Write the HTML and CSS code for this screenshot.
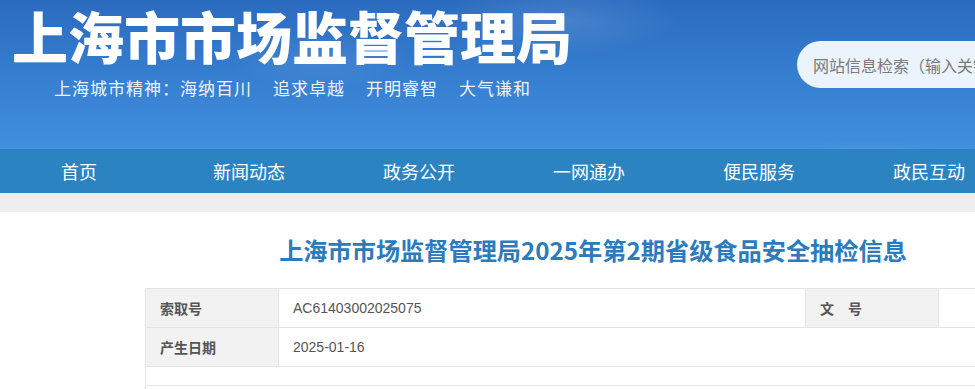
FILE: index.html
```html
<!DOCTYPE html>
<html lang="zh-CN">
<head>
    <meta charset="UTF-8">
    <meta name="viewport" content="width=device-width, initial-scale=1.0">
    <title>上海市市场监督管理局</title>
    <link rel="stylesheet" href="styles.css">
</head>
<body>
    <div class="header">
        <div class="wrap header-inner">
            <div class="brand">
                <h1 class="site-name">上海市市场监督管理局</h1>
                <p class="motto">上海城市精神：海纳百川<span>追求卓越</span><span>开明睿智</span><span>大气谦和</span></p>
            </div>
            <div class="search">
                <input type="text" placeholder="网站信息检索（输入关键字）">
            </div>
        </div>
    </div>
    <div class="nav">
        <ul class="wrap nav-list">
            <li><a href="#">首页</a></li>
            <li><a href="#">新闻动态</a></li>
            <li><a href="#">政务公开</a></li>
            <li><a href="#">一网通办</a></li>
            <li><a href="#">便民服务</a></li>
            <li><a href="#">政民互动</a></li>
            <li><a href="#">专题专栏</a></li>
        </ul>
    </div>
    <div class="band"></div>
    <div class="wrap main">
        <h2 class="article-title">上海市市场监督管理局2025年第2期省级食品安全抽检信息</h2>
        <table class="info-table">
            <tr>
                <th>索取号</th>
                <td>AC61403002025075</td>
                <th>文　号</th>
                <td></td>
            </tr>
            <tr>
                <th>产生日期</th>
                <td colspan="3">2025-01-16</td>
            </tr>
            <tr class="blank">
                <td colspan="4"></td>
            </tr>
            <tr>
                <td colspan="4"></td>
            </tr>
        </table>
    </div>
</body>
</html>
```

FILE: styles.css
```css
html {
    overflow-x: hidden;
}
body {
    margin: 0;
    padding: 0;
    font-family: "Liberation Sans", "Noto Sans CJK SC", sans-serif;
    background: #fff;
}
.wrap {
    width: 1200px;
}
.header {
    height: 149px;
    background:
        radial-gradient(ellipse 140px 40px at 870px 180px, rgba(255,255,255,0.18), rgba(255,255,255,0)),
        radial-gradient(ellipse 120px 35px at 560px 20px, rgba(255,255,255,0.12), rgba(255,255,255,0)),
        radial-gradient(ellipse 90px 30px at 320px 60px, rgba(255,255,255,0.08), rgba(255,255,255,0)),
        linear-gradient(#2b6bbf, #3a85d6 70%, #4090dd);
    overflow: hidden;
}
.header-inner {
    display: flex;
}
.brand {
    padding-left: 12px;
}
.site-name {
    margin: 5px 0 0;
    font-family: "Noto Sans CJK SC", sans-serif;
    font-size: 56px;
    font-weight: 900;
    line-height: 60px;
    color: #fff;
}
.motto {
    margin: 12px 0 0 42px;
    font-family: "Noto Sans CJK SC", sans-serif;
    font-size: 17px;
    line-height: 22px;
    letter-spacing: 1px;
    color: #eef4fc;
}
.motto span {
    margin-left: 21px;
}
.search {
    margin: 41px 0 0 auto;
}
.search input {
    box-sizing: border-box;
    width: 403px;
    height: 47px;
    padding: 0 16px;
    border: none;
    border-radius: 24px 0 0 24px;
    background: #ebf3fc;
    font-family: "Noto Sans CJK SC", sans-serif;
    font-size: 16px;
    color: #666;
    outline: none;
}
.search input::placeholder {
    color: #7a7a7a;
}
.nav {
    height: 44px;
    background: #2b84c1;
}
.nav-list {
    display: flex;
    margin: 0 0 0 -6px;
    padding: 0;
    list-style: none;
}
.nav-list li {
    width: 170px;
    text-align: center;
}
.nav-list a {
    display: block;
    line-height: 44px;
    font-family: "Noto Sans CJK SC", sans-serif;
    font-size: 18px;
    color: #fff;
    text-decoration: none;
}
.band {
    height: 19px;
    background: #eeeeee;
}
.main {
    padding: 20px 145px 0;
    box-sizing: border-box;
}
.article-title {
    margin: 0 14px 0 0;
    text-align: center;
    font-family: "Noto Sans CJK SC", sans-serif;
    font-size: 24.2px;
    font-weight: bold;
    line-height: 36px;
    color: #2b7bbd;
}
.info-table {
    width: 910px;
    margin-top: 20px;
    border-collapse: collapse;
    font-size: 14px;
    color: #555;
}
.info-table th,
.info-table td {
    height: 38px;
    padding: 0 14px;
    border: 1px solid #e3e3e3;
    text-align: left;
    vertical-align: middle;
}
.info-table th {
    width: 104px;
    background: #f2f2f2;
    font-family: "Noto Sans CJK SC", sans-serif;
    font-weight: bold;
    color: #555;
}
.info-table td {
    width: 498px;
}
.info-table td:last-child {
    width: auto;
}
.info-table .blank td {
    height: 18px;
}
```
